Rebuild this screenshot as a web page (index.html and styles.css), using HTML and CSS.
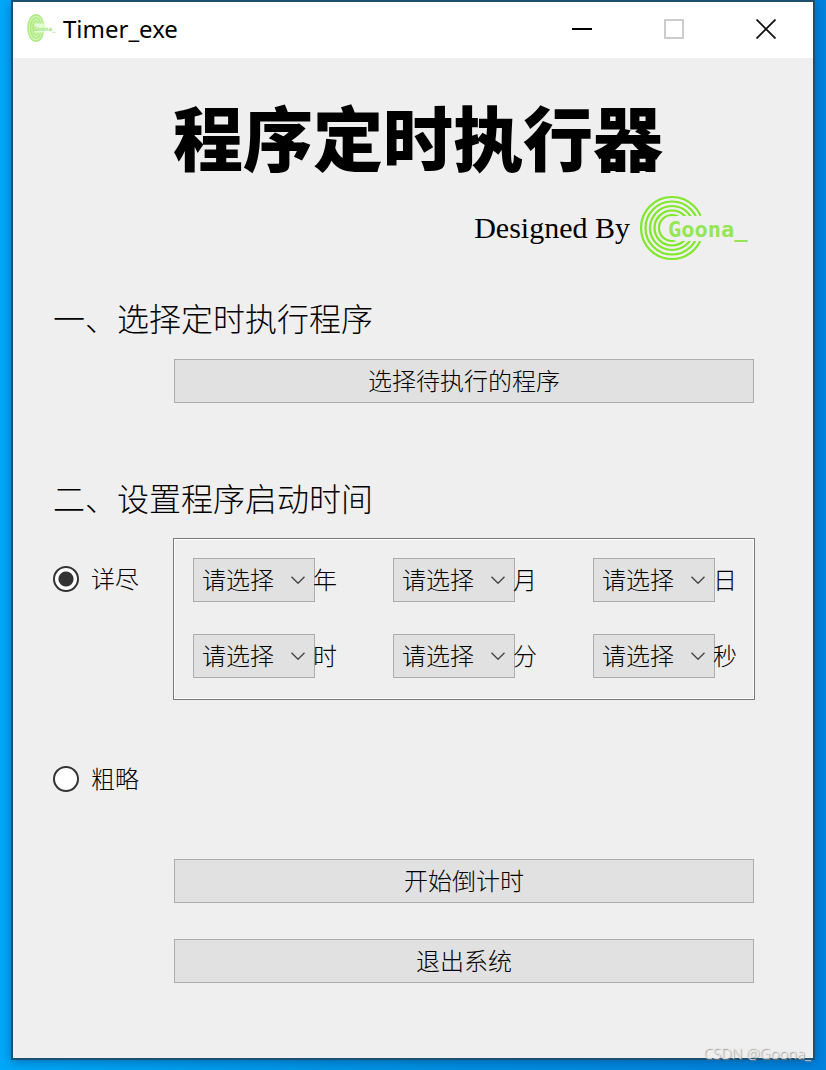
FILE: index.html
```html
<!DOCTYPE html>
<html lang="zh-CN">
<head>
	<meta charset="UTF-8">
	<meta name="viewport" content="width=device-width, initial-scale=1.0">
	<title>Timer_exe</title>
	<link rel="stylesheet" href="styles.css">
</head>
<body>
	<svg class="symbols" aria-hidden="true">
		<symbol id="chevron" viewBox="0 0 14 8">
			<path d="M.5 .8 7 7.2 13.5 .8" fill="none" stroke="#444" stroke-width="1.4"/>
		</symbol>
	</svg>

	<div class="window">
		<header class="titlebar">
			<svg class="app-icon" width="30" height="30" viewBox="0 0 30 30" aria-hidden="true">
				<ellipse cx="9" cy="14" rx="8.500" ry="14" fill="#d3f5b8"/>
				<g fill="none" stroke="#b0ea85" stroke-width="1.600">
					<path d="M16 9C15 4 12.500 1 9 1C4.500 1 1 6.500 1 14S4.500 27 9 27C12.500 27 15 24 16 19"/>
					<path d="M13.500 9C12.500 5.500 11 4 9 4C6 4 3.500 8.500 3.500 14S6 24 9 24C11 24 12.500 22.500 13.500 19"/>
					<path d="M11 9C10.500 7.500 10 7 9 7C7 7 6 10 6 14S7 21 9 21C10 21 10.500 20.500 11 19"/>
				</g>
				<rect x="8" y="10" width="10" height="8" fill="#e6fad6"/>
				<text x="7" y="17" class="app-icon-text">Goona_</text>
			</svg>
			<span class="caption">Timer_exe</span>
			<div class="window-controls">
				<button type="button" aria-label="最小化">
					<svg width="20" height="20"><path d="M0 10H20" stroke="#000" stroke-width="2"/></svg>
				</button>
				<button type="button" aria-label="最大化" disabled>
					<svg width="20" height="20"><rect x="1" y="1" width="18" height="18" fill="none" stroke="#ccc" stroke-width="2"/></svg>
				</button>
				<button type="button" aria-label="关闭">
					<svg width="20" height="20"><path d="M.5 .5 19.500 19.500M19.500 .5 .5 19.500" stroke="#111" stroke-width="1.8"/></svg>
				</button>
			</div>
		</header>

		<main class="content">
			<h1>程序定时执行器</h1>
			<div class="author">
				<span>Designed By</span>
				<svg class="logo" width="112" height="66" viewBox="0 0 112 66" role="img" aria-label="Goona_">
					<clipPath id="rings">
						<path d="M0 0H63V21H38L27 26V42L38 46H63V66H0Z"/>
					</clipPath>
					<g clip-path="url(#rings)" fill="none" stroke="#80e82a" stroke-width="2.200">
						<circle cx="34" cy="33" r="31"/>
						<circle cx="34" cy="33" r="26.500"/>
						<circle cx="34" cy="33" r="22"/>
						<circle cx="34" cy="33" r="17.500"/>
						<circle cx="34" cy="33" r="13"/>
					</g>
					<text x="30" y="42" class="logo-text">Goona_</text>
				</svg>
			</div>

			<h2>一、选择定时执行程序</h2>
			<button type="button" class="btn">选择待执行的程序</button>

			<h2 class="second">二、设置程序启动时间</h2>
			<label class="mode"><input type="radio" name="mode" checked><span>详尽</span></label>
			<div class="group">
				<div class="field">
					<div class="combo">
						<select id="year"><option>请选择</option></select>
						<svg><use href="#chevron"/></svg>
					</div>
					<label for="year">年</label>
				</div>
				<div class="field">
					<div class="combo">
						<select id="month"><option>请选择</option></select>
						<svg><use href="#chevron"/></svg>
					</div>
					<label for="month">月</label>
				</div>
				<div class="field">
					<div class="combo">
						<select id="day"><option>请选择</option></select>
						<svg><use href="#chevron"/></svg>
					</div>
					<label for="day">日</label>
				</div>
				<div class="field">
					<div class="combo">
						<select id="hour"><option>请选择</option></select>
						<svg><use href="#chevron"/></svg>
					</div>
					<label for="hour">时</label>
				</div>
				<div class="field">
					<div class="combo">
						<select id="minute"><option>请选择</option></select>
						<svg><use href="#chevron"/></svg>
					</div>
					<label for="minute">分</label>
				</div>
				<div class="field">
					<div class="combo">
						<select id="second"><option>请选择</option></select>
						<svg><use href="#chevron"/></svg>
					</div>
					<label for="second">秒</label>
				</div>
			</div>
			<label class="mode rough"><input type="radio" name="mode"><span>粗略</span></label>

			<div class="actions">
				<button type="button" class="btn">开始倒计时</button>
				<button type="button" class="btn">退出系统</button>
			</div>
		</main>
	</div>
	<div class="watermark">CSDN @Goona_</div>
</body>
</html>
```
FILE: styles.css
```css
* {
	box-sizing: border-box;
}
body {
	margin: 0;
	min-height: 100vh;
	padding: 0 11px 10px;
	display: flex;
	background: linear-gradient(90deg, #00a8fa, #0091e4 50%, #0083df);
	color: #000;
	font-family: "Noto Sans CJK SC", sans-serif;
	font-size: 24px;
	font-weight: 300;
}
button,
select {
	font: inherit;
	color: inherit;
}
.symbols {
	position: absolute;
	width: 0;
	height: 0;
}
.window {
	flex: 1;
	border: 2px solid #1c4f70;
	background: #efefef;
	box-shadow: 0 2px 10px rgba(0, 40, 80, 0.4);
}

/* title bar */
.titlebar {
	display: flex;
	align-items: center;
	height: 56px;
	padding: 0 1px 2px 14px;
	background: #fff;
}
.app-icon-text {
	fill: #a0e66c;
	font: bold 6px "DejaVu Sans Mono", monospace;
}
.caption {
	margin-left: 6px;
	padding-bottom: 2px;
	font: 24px "Noto Sans", sans-serif;
}
.window-controls {
	display: flex;
	margin-left: auto;
}
.window-controls button {
	display: flex;
	align-items: center;
	justify-content: center;
	width: 92px;
	height: 54px;
	padding: 0;
	border: none;
	background: none;
}

/* form */
.content {
	display: grid;
	grid-template-columns: 120px 1fr;
	padding: 40px 58px 75px 40px;
}
h1 {
	grid-column: 2;
	margin: 0;
	font-size: 70px;
	font-weight: 900;
	line-height: 76px;
	white-space: nowrap;
}
.author {
	grid-column: 2;
	display: flex;
	align-items: center;
	justify-content: flex-end;
	gap: 8px;
	margin-top: 21px;
	padding-right: 5px;
	font-family: "Liberation Serif", serif;
	font-size: 30px;
	font-weight: 400;
}
.logo-text {
	fill: #94e652;
	font: bold 22px "DejaVu Sans Mono", monospace;
}
h2 {
	grid-column: 1 / -1;
	margin: 36px 0 22px;
	font-size: 32px;
	font-weight: 300;
	line-height: 40px;
}
h2.second {
	margin-top: 74px;
	margin-bottom: 21px;
}
.btn {
	grid-column: 2;
	height: 44px;
	margin: 0 1px;
	padding: 0 0 4px;
	border: 1px solid #adadad;
	background: #e1e1e1;
}
.mode {
	display: flex;
	align-items: center;
	gap: 12px;
	height: 44px;
	margin-top: 19px;
}
.mode span,
.field label {
	padding-bottom: 4px;
}
.mode input {
	appearance: none;
	width: 26px;
	height: 26px;
	margin: 0;
	border: 2px solid #333;
	border-radius: 50%;
	background: #fff;
}
.mode input:checked {
	background: radial-gradient(circle, #333 7px, #fff 8px);
}
.mode.rough {
	grid-column: 1 / -1;
	margin-top: 57px;
}
.group {
	display: grid;
	grid-template-columns: repeat(3, auto);
	justify-content: space-between;
	row-gap: 32px;
	padding: 19px 17px 21px 19px;
	border: 1px solid #7a7a7a;
	box-shadow: inset 0 0 0 1px #fff;
}
.field {
	display: flex;
	align-items: center;
}
.field label {
	z-index: 1;
	margin-left: -2px;
}
.combo {
	position: relative;
}
.combo select {
	display: block;
	appearance: none;
	width: 122px;
	height: 44px;
	padding: 0 8px 4px;
	border: 1px solid #adadad;
	border-radius: 0;
	background: #e1e1e1;
}
.combo svg {
	position: absolute;
	top: 18px;
	right: 10px;
	width: 14px;
	height: 8px;
	pointer-events: none;
}
.actions {
	grid-column: 2;
	display: flex;
	flex-direction: column;
	gap: 36px;
	margin-top: 58px;
}

.watermark {
	position: absolute;
	right: 15px;
	bottom: 7px;
	color: #e8e8e8;
	font-family: "Open Sans", sans-serif;
	font-size: 15px;
	font-weight: 300;
	text-shadow: 1px 1px 1px #888;
}
```
